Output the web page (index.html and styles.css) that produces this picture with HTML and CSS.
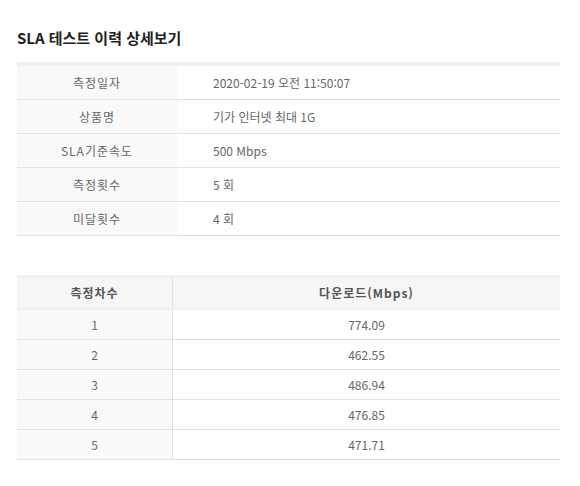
FILE: index.html
```html
<!DOCTYPE html>
<html lang="ko">

<head>
    <meta charset="UTF-8">
    <meta name="viewport" content="width=device-width, initial-scale=1.0">
    <title>SLA 테스트 이력 상세보기</title>
    <link rel="stylesheet" href="styles.css">
</head>

<body>
    <div class="wrap">
        <h2 class="title">SLA 테스트 이력 상세보기</h2>

        <!-- 측정 정보 -->
        <table class="info">
            <tr>
                <th>측정일자</th>
                <td>2020-02-19 오전 11:50:07</td>
            </tr>
            <tr>
                <th>상품명</th>
                <td>기가 인터넷 최대 1G</td>
            </tr>
            <tr>
                <th>SLA기준속도</th>
                <td>500 Mbps</td>
            </tr>
            <tr>
                <th>측정횟수</th>
                <td>5 회</td>
            </tr>
            <tr>
                <th>미달횟수</th>
                <td>4 회</td>
            </tr>
        </table>

        <!-- 측정 결과 -->
        <table class="result">
            <thead>
                <tr>
                    <th class="no">측정차수</th>
                    <th>다운로드(Mbps)</th>
                </tr>
            </thead>
            <tbody>
                <tr><td class="no">1</td><td>774.09</td></tr>
                <tr><td class="no">2</td><td>462.55</td></tr>
                <tr><td class="no">3</td><td>486.94</td></tr>
                <tr><td class="no">4</td><td>476.85</td></tr>
                <tr><td class="no">5</td><td>471.71</td></tr>
            </tbody>
        </table>
    </div>
</body>

</html>
```

FILE: styles.css
```css
body {
    margin: 0;
    padding: 0;
    background: #fff;
    font-family: "Noto Sans CJK KR", "DejaVu Sans", sans-serif;
    font-size: 12px;
    color: #666;
}

.wrap {
    padding: 25px 20px 0 17px;
}

.title {
    margin: 0 0 11px;
    font-size: 15px;
    line-height: 26px;
    font-weight: bold;
    color: #222;
}

table {
    width: 543px;
    border-collapse: collapse;
    border-top: 1px solid #d6d6d6;
}

th,
td {
    padding: 0;
    border-bottom: 1px solid #e2e2e2;
}

tr:first-child th,
tr:first-child td {
    border-top: 3px solid #f0f0f0;
}

/* 측정 정보 */
.info th {
    width: 160px;
    height: 33px;
    background: #f9f9f9;
    font-weight: normal;
    text-align: center;
    letter-spacing: 1px;
}

.info tr:first-child th,
.info tr:first-child td {
    border-top-width: 4px;
}

.info td {
    padding-left: 36px;
    text-align: left;
}

/* 측정 결과 */
.result {
    margin-top: 39px;
}

.result th {
    height: 29px;
    background: #f6f6f6;
    color: #555;
    font-weight: bold;
    letter-spacing: 1px;
}

.result td {
    height: 29px;
    text-align: center;
}

.result .no {
    width: 155px;
    border-right: 1px solid #e2e2e2;
}

.result td.no {
    background: #f9f9f9;
}
```
